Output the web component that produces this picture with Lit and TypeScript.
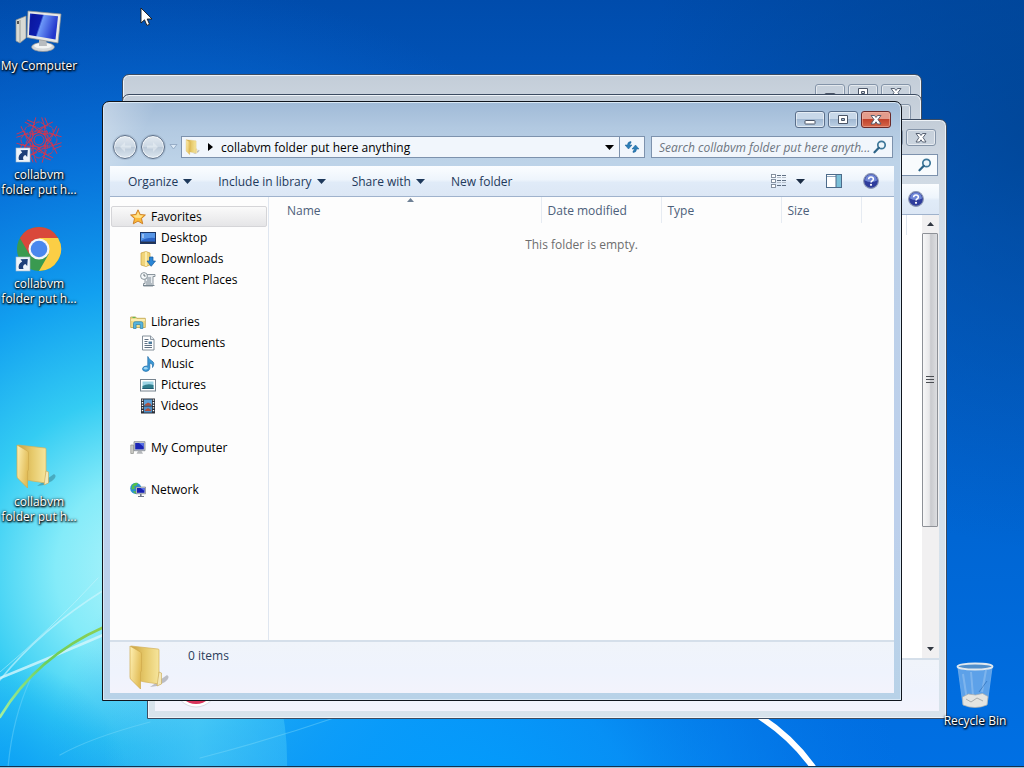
import { LitElement, html, css, svg, nothing } from "lit";
import { customElement, property } from "lit/decorators.js";
import { classMap } from "lit/directives/class-map.js";

const art: Record<string, unknown> = {
  star: svg`<path d="M8 .8l2.200 4.700 5.200.5-3.900 3.500 1.200 5.300L8 12.100l-4.700 2.700 1.200-5.300L.6 6l5.200-.5z" fill="#fbb93a" stroke="#c9781c" stroke-width=".9"/><path d="M8 2.500l1.600 3.700 3.600.4-2.700 2.400-5-.2L3 6.600l3.500-.4z" fill="#ffe28a"/>`,
  desktop: svg`<rect x=".5" y="2.500" width="15" height="11" fill="#2b63c4" stroke="#1c3666"/><path d="M1 3h14v5Q7 7 1 11z" fill="#5795e6"/><rect x="1" y="11.600" width="14" height="1.600" fill="#27344f"/><path d="M2 5h2M2 7h2" stroke="#fff" stroke-width=".8"/>`,
  downloads: svg`<path d="M1 2l5-1.500 4 1.500V14l-4 1.500L1 14z" fill="#f0d479" stroke="#c8a23d" stroke-width=".7"/><path d="M6 .8V15" stroke="#fff4bd" stroke-width="1.500"/><path d="M9.500 6h3.500v4h2.500L11.200 15.300 7 10h2.500z" fill="#2a86d6" stroke="#155a9e" stroke-width=".7"/>`,
  recent: svg`<path d="M5 2.500h10v2h-2v9.500H3.500v-2.500H5z" fill="#e9edf0" stroke="#7f8b93" stroke-width=".9"/><path d="M7 6h4M7 8h4M6 10h5M3 13.500h11.500M6 12h6" stroke="#717f8a" stroke-width=".9"/><circle cx="4" cy="4" r="3.400" fill="#f7fafb" stroke="#7f8b93" stroke-width=".9"/><path d="M4 2v2h1.600" fill="none" stroke="#46535c" stroke-width=".8"/>`,
  libraries: svg`<path d="M.7 3h5l1 1.300h8.600v9.200H.7z" fill="#f3dd8a" stroke="#bfa24a" stroke-width=".8"/><path d="M1 6h14" stroke="#fff6c8" stroke-width="1.300"/><path d="M3.500 14.500V9.300q0-1.600 1.700-1.600h6q1.700 0 1.700 1.600v5.200h-2.600v-4H6.100v4z" fill="#56b4dd" stroke="#2b7fae" stroke-width=".7"/><path d="M2.500 3.500h3" stroke="#5fb858" stroke-width="1.200"/>`,
  documents: svg`<path d="M2.500 1h8L14 4.300V15H2.500z" fill="#fff" stroke="#77838f" stroke-width=".9"/><path d="M10.500 1v3.500H14" fill="#dfe6ec" stroke="#77838f" stroke-width=".8"/><path d="M4.500 4.500h4M4.500 6.500h3M4.500 8.500h3M4.500 10.500h7.500M4.500 12.500h7.500" stroke="#4f6175" stroke-width=".9"/><rect x="8.500" y="6.500" width="3.500" height="2.600" fill="#4f7b9c"/>`,
  music: svg`<path d="M7.800 .5q.6 2.400 3.800 4.200Q15.500 7 12.500 11.500q.8-3.500-2.700-4.600v5.400q-.4 2.900-4 3.200-3.500-.3-3.300-2.900.6-2.600 4-2.600.8 0 1.300.2z" fill="#3d9ad6" stroke="#1c6ca8" stroke-width=".7"/><ellipse cx="5.700" cy="12.300" rx="1.900" ry="1.300" fill="#9fd6f4"/>`,
  pictures: svg`<rect x=".5" y="2.500" width="15" height="11.500" fill="#fff" stroke="#76838e"/><rect x="2.500" y="4.500" width="11" height="7.500" fill="#9bd3e4"/><path d="M2.500 9q5-3 11-1v4h-11z" fill="#2f7d8c"/><path d="M2.500 11h11v1h-11z" fill="#1f5a72"/>`,
  videos: svg`<rect x="1" y=".5" width="14" height="15" fill="#2b2f38"/><rect x="4" y="1.500" width="8" height="6" fill="#5d9fd6"/><rect x="4" y="8.500" width="8" height="6" fill="#4d8fc8"/><path d="M5 6.500l3-2L11 6v1.500H5zM5 12l3-2 3 2v1H5z" fill="#b0503c"/><path d="M2.500 1.500v13M13.500 1.500v13" stroke="#fff" stroke-width="1.400" stroke-dasharray="1.300 1.300"/>`,
  computer: svg`<path d="M.8 5h2.600v8.500H.8z" fill="#cfd0cb" stroke="#8b8c88" stroke-width=".7"/><path d="M4 1.700h11v9H4z" fill="#c9ced6" stroke="#82878f" stroke-width=".8"/><path d="M5.200 3h8.600v6.400H5.200z" fill="#1b24b5"/><path d="M9 3h4.800v4z" fill="#5870e4"/><path d="M8 11h3.500l1.500 2.800H6.500z" fill="#b4b7ba"/>`,
  network: svg`<circle cx="5.800" cy="6.400" r="5.600" fill="#2a8fd2"/><path d="M2 3.200q3-3 6-2.200L6.500 3.500 4 4.500l1 2.500-3.500.5zM3 9l3 .5v2.300q-2-.3-3-2.800z" fill="#54c04a"/><path d="M6 5h9.500v6.800H6z" fill="#c8cdd6" stroke="#70757d" stroke-width=".6"/><path d="M7 6h7.500v4.800H7z" fill="#1720b4"/><path d="M10.500 6h4v3z" fill="#5b74e8"/><path d="M10 12h1.600v2H14v1H8v-1h2z" fill="#6e7788"/>`,
};

const glyph = (name: string) =>
  html`<svg class="glyph" viewBox="0 0 16 16" aria-hidden="true">${art[name]}</svg>`;

const folder = (cls: string, box = "0 0 48 48") => html`<svg class=${cls} viewBox=${box} aria-hidden="true">
  <defs>
    <linearGradient id="fa" x1="0" x2="1" y1="0" y2=".4"><stop offset="0" stop-color="#fff1b4"/><stop offset="1" stop-color="#e2bd58"/></linearGradient>
    <linearGradient id="fb" x1="0" x2="1"><stop offset="0" stop-color="#c9a043"/><stop offset=".5" stop-color="#e6c96a"/><stop offset="1" stop-color="#f6e59c"/></linearGradient>
  </defs>
  <path d="M22 43L39 31q4 2-2 7l-8 4z" fill="#000" opacity=".22"/>
  <path d="M3 2l27 3q1 0 1 1v34l-14-2L3 35z" fill="url(#fb)" stroke="#d4b25a" stroke-width=".7"/>
  <path d="M31 28l2.500 1v11L29 42z" fill="#f4e8b8" stroke="#c9a850" stroke-width=".6"/>
  <path d="M2 2l10.500 6q1 .7 1 2v17l-1 1v17L3.500 36Q2 35 2 33z" fill="url(#fa)" stroke="#d0ab4c" stroke-width=".7"/>
</svg>`;

const arrowDown = html`<svg class="down" viewBox="0 0 9 5" aria-hidden="true"><path d="M0 0h9L4.500 5z" fill="currentColor"/></svg>`;

const lens = html`<svg class="lens" viewBox="0 0 14 14" aria-hidden="true"><circle cx="8.500" cy="5" r="3.700" fill="#eef6fb" stroke="#3d7799" stroke-width="1.700"/><path d="M5.800 7.800L1.500 12.300" stroke="#2d6488" stroke-width="2.200" stroke-linecap="round"/></svg>`;

const help = html`<svg class="help" viewBox="0 0 16 16" aria-hidden="true"><circle cx="8" cy="8" r="7.400" fill="#2e3c9c" stroke="#8d99b5" stroke-width="1.100"/><path d="M2 7.500a6 6 0 0 1 12 0q-6 3-12 0z" fill="#6f86d6"/><path d="M5.600 6.200Q5.800 4 8 4t2.400 2q0 1.200-1.300 1.900-1 .6-1 1.600" fill="none" stroke="#fff" stroke-width="1.600"/><circle cx="8" cy="11.800" r="1.100" fill="#fff"/></svg>`;

const base = css`
  * { box-sizing: border-box; }
  button { font: inherit; color: inherit; background: none; border: 0; padding: 0; margin: 0; }
  svg { display: block; flex: none; }
`;

/** Glass window frame with caption buttons; the contents are slotted below the caption. */
@customElement("aero-window")
class AeroWindow extends LitElement {
  @property({ type: Boolean, reflect: true }) active = false;

  static styles = [
    base,
    css`
      :host {
        display: flex;
        flex-direction: column;
        box-sizing: border-box;
        border: 1px solid #3c4c62;
        border-radius: 7px 7px 0 0;
        padding: 0 7px 7px;
        background: linear-gradient(#c3cdd8, #cfd8e2 40px, #d3dee9 110px, #d8e3ec);
        box-shadow: inset 0 0 0 1px #eef3f8;
      }
      :host([active]) {
        border-color: #10151d;
        background: linear-gradient(115deg, #ffffff55, #ffffff00 50px),
          linear-gradient(#a0bad7, #b2c9e1 26px, #bdd3e8 60px, #bdd1e9 120px, #bdd0ec 70%, #b8d2e8);
        box-shadow: inset 0 0 0 1px #d9e8f5;
      }
      .caption {
        display: flex;
        justify-content: flex-end;
        gap: 3px;
        height: 32px;
        flex: none;
        padding: 9px 3px 0 0;
      }
      .caption button {
        display: grid;
        place-items: center;
        width: 30px;
        height: 17px;
        border: 1px solid #8494a8;
        border-radius: 3px;
        box-shadow: inset 0 0 0 1px #ffffff88;
      }
      :host([active]) .caption button {
        border-color: #5a6f8b;
        background: linear-gradient(#c8d8e9 48%, #a2b9d3 50%, #bdd1e5);
      }
      :host([active]) .caption .close {
        border-color: #6a2a2a;
        background: linear-gradient(#e39c8c 48%, #c1432c 50%, #d5674a);
        box-shadow: inset 0 0 0 1px #f4b9a888;
      }
      .caption svg { width: 14px; height: 12px; }
    `,
  ];

  render() {
    return html`
      <div class="caption">
        <button aria-label="Minimize"><svg viewBox="0 0 14 12"><rect x="2" y="6.500" width="10" height="3.500" rx=".5" fill="#fff" stroke="#4b5566"/></svg></button>
        <button aria-label="Maximize"><svg viewBox="0 0 14 12"><path d="M2.500 1.500h9v8h-9zM5.500 4.500v2h3v-2z" fill="#fff" fill-rule="evenodd" stroke="#4b5566"/></svg></button>
        <button class="close" aria-label="Close"><svg viewBox="0 0 14 12"><path d="M2 1.500h3.500L7 3.500l1.500-2H12L9 5.500l3 4.500H8.500L7 7.800 5.500 10H2L5 5.500z" fill="#fff" stroke="#4b5566" stroke-width=".9"/></svg></button>
      </div>
      <slot></slot>
    `;
  }
}

type Item = { name: string; icon: string; children?: Item[]; selected?: boolean };

const places: Item[] = [
  {
    name: "Favorites", icon: "star", selected: true,
    children: [
      { name: "Desktop", icon: "desktop" },
      { name: "Downloads", icon: "downloads" },
      { name: "Recent Places", icon: "recent" },
    ],
  },
  {
    name: "Libraries", icon: "libraries",
    children: [
      { name: "Documents", icon: "documents" },
      { name: "Music", icon: "music" },
      { name: "Pictures", icon: "pictures" },
      { name: "Videos", icon: "videos" },
    ],
  },
  { name: "My Computer", icon: "computer" },
  { name: "Network", icon: "network" },
];

const commands = [
  { label: "Organize", menu: true },
  { label: "Include in library", menu: true },
  { label: "Share with", menu: true },
  { label: "New folder", menu: false },
];

const shortcut = svg`<rect x="1" y="32" width="14" height="14" fill="#eef4fa" stroke="#a9bccd" stroke-width=".6"/><path d="M4 44q-1.600-5 3.200-7.600L5.500 34.300l7.300-.3-.6 7-1.800-1.900Q7 40.500 8.500 44z" fill="#1d3f78"/>`;

const rosette = html`<svg class="big" viewBox="0 0 48 48" aria-hidden="true">
  <g fill="none" stroke="#d8344c" stroke-width=".9">
    ${[0, 45, 90, 135].map((a) => svg`<ellipse cx="24" cy="24" rx="18" ry="9" transform="rotate(${a} 24 24)" stroke-dasharray="4 1"/>`)}
    ${[0, 45, 90, 135, 180, 225, 270, 315].map((a) => svg`<path d="M18 2l6 7 6-7M21 1l6 6M24 9l-4 8h8z" transform="rotate(${a + 22} 24 24)"/>`)}
    <circle cx="24" cy="24" r="5"/><circle cx="24" cy="24" r="7.500" stroke-dasharray="2 1"/>
  </g>
  ${shortcut}
</svg>`;

const chrome = html`<svg class="big" viewBox="0 0 48 48" aria-hidden="true">
  <circle cx="24" cy="24" r="22" fill="#3a9a50"/>
  <path d="M4.900 13A22 22 0 0 1 43.100 13L24 13.500 14.500 29.500z" fill="#d9483b"/>
  <path d="M43.100 13A22 22 0 0 1 24 46L33.500 29.500 24 13z" fill="#fbce45"/>
  <circle cx="24" cy="24" r="10.500" fill="#f4f6f8"/><circle cx="24" cy="24" r="8.300" fill="#4a87ee"/>
  ${shortcut}
</svg>`;

const pc = html`<svg class="big" viewBox="0 0 48 48" aria-hidden="true">
  <defs><linearGradient id="scr" x1="0" x2="1" y1="0" y2=".3"><stop offset="0" stop-color="#2a4ee0"/><stop offset=".12" stop-color="#0a17a0"/><stop offset=".44" stop-color="#0d1eae"/><stop offset=".5" stop-color="#6c97f8"/><stop offset="1" stop-color="#2337cc"/></linearGradient></defs>
  <path d="M1 13l10-4v22L5 36l-4-2z" fill="#d9dad4" stroke="#8e918d" stroke-width=".7"/><path d="M5 13v22" stroke="#9c9f9a"/><rect x="2" y="14" width="2" height="3" fill="#555"/>
  <ellipse cx="28" cy="40" rx="11.500" ry="4.500" fill="#d5d8da" stroke="#8c8f92" stroke-width=".7"/><ellipse cx="28" cy="38.800" rx="9" ry="2.800" fill="#f3f4f4"/>
  <path d="M24 30h7l1 9h-8z" fill="#b9bcbf"/>
  <path d="M13 4l33 3-3 29-31-5.500z" fill="#e7e8e6" stroke="#8f9292" stroke-width=".7"/>
  <path d="M15 6.500l28 2.700-2.500 23.300L14 28z" fill="url(#scr)"/>
</svg>`;

const bin = html`<svg class="big" viewBox="0 0 48 48" aria-hidden="true">
  <path d="M7 5l5 37q12 5 24 0l5-37z" fill="#cfe3f7" opacity=".45" stroke="#dcecfa" stroke-width="1.200"/>
  <path d="M12 12l4 26M35 8l-4 22M20 10l2 24" stroke="#fff" opacity=".2" stroke-width="2"/>
  <path d="M36 19l-8 11" stroke="#1d5da8" opacity=".5"/>
  <path d="M11.500 35l6-3 7 1 7-1.500 5.500 3L36 43q-12 5-24 0z" fill="#e3e4e1" stroke="#a9adae" stroke-width=".7"/>
  <path d="M15 37l5 3 6-4 6 3" fill="none" stroke="#a9adae"/>
  <ellipse cx="24" cy="4.500" rx="17.500" ry="3" fill="#4f8ecb" stroke="#dfe8ef" stroke-width="1.800"/>
</svg>`;

@customElement("app-root")
class AppRoot extends LitElement {
  static styles = [
    base,
    css`
      :host {
        display: block;
        position: relative;
        height: 100vh;
        overflow: hidden;
        font: 12px/15px "Open Sans", "Noto Sans", sans-serif;
        color: #000;
        background: #0058c4;
      }
      .wallpaper { position: absolute; inset: 0; width: 100%; height: 100%; }
      .icons {
        position: relative;
        display: grid;
        grid-auto-rows: 109px;
        width: 78px;
      }
      .shortcut {
        display: flex;
        flex-direction: column;
        align-items: center;
        gap: 3px;
        width: 78px;
        padding-top: 7px;
        color: #fff;
        text-align: center;
        text-decoration: none;
        text-shadow: 0 1px 2px #000, 1px 1px 2px #000, 0 0 3px #000a;
      }
      .shortcut.lower { grid-row: 5; }
      .big { width: 48px; height: 48px; }
      .bin { position: absolute; right: 10px; bottom: 40px; padding: 0; }
      .pointer { position: absolute; left: 140px; top: 7px; width: 13px; height: 20px; }
      .taskbar {
        position: absolute;
        inset: auto 0 0 0;
        height: 2px;
        border-top: 1px solid #14304c;
        background: #9fc6de;
      }
      aero-window { position: absolute; }
      .first { inset: 74px 102px 118px 122px; }
      .second { inset: 94px 102px 98px 122px; }
      .third { inset: 119px 77px 49px 147px; }
      .main { inset: 101px 122px 67px 102px; }

      .nav { display: flex; align-items: center; flex: none; height: 24px; margin: 1px 1px 7px 3px; }
      .travel { display: flex; gap: 4px; }
      .travel button {
        width: 24px; height: 24px; border-radius: 50%;
        border: 1px solid #5f7189;
        background: linear-gradient(#e3eaf1, #ccd8e4 48%, #bccad9 52%, #dbe6ef);
        box-shadow: inset 0 0 0 1px #ffffff99, 0 0 0 1px #8fa3ba66;
      }
      .travel svg { width: 22px; height: 22px; }
      .history { width: 16px; display: grid; place-items: center; }
      .history svg { width: 9px; height: 6px; }
      .field {
        display: flex;
        align-items: center;
        height: 22px;
        border: 1px solid #7d92ad;
        background: #f1f6fc;
      }
      .address { flex: 1; min-width: 0; }
      .address .path { display: flex; align-items: center; flex: 1; min-width: 0; gap: 8px; padding-left: 2px; }
      .address .path .crumb { white-space: nowrap; }
      .mini { width: 16px; height: 16px; }
      .tri { width: 5px; height: 8px; }
      .drop { padding: 0 5px; }
      .down { width: 9px; height: 5px; }
      .refresh { display: grid; place-items: center; width: 25px; height: 20px; border-left: 1px solid #7d92ad; }
      .refresh svg { width: 16px; height: 14px; }
      .search { width: 242px; margin-left: 6px; padding: 0 5px 0 7px; }
      .search input {
        flex: 1; min-width: 0; border: 0; padding: 0; outline: 0; background: none;
        font: inherit; font-style: italic;
      }
      .search input::placeholder { color: #6d7580; opacity: 1; }
      .lens { width: 14px; height: 14px; }

      .toolbar {
        display: flex;
        align-items: center;
        gap: 26px;
        flex: none;
        height: 31px;
        padding: 0 15px 0 18px;
        color: #1e395b;
        border-bottom: 1px solid #9fb2cc;
        background: linear-gradient(#fbfdff, #eef5fc 45%, #e0ebf8 55%, #dce7f5);
      }
      .toolbar button { display: flex; align-items: center; gap: 5px; white-space: nowrap; }
      .toolbar .tools { display: flex; align-items: center; margin-left: auto; gap: 21px; }
      .toolbar .view { gap: 9px; }
      .tools svg { color: #1b2d45; }
      .list, .pane { width: 16px; height: 16px; }
      .help { width: 16px; height: 16px; }

      .body { display: flex; flex: 1; min-height: 0; background: #fdfdfd; }
      .tree { width: 159px; flex: none; padding: 9px 1px 0; border-right: 1px solid #dfe6f0; }
      .tree ul { list-style: none; margin: 0; padding: 0; }
      .tree .group { margin-bottom: 21px; }
      .tree a {
        display: flex; align-items: center; gap: 5px; height: 21px; padding-left: 18px;
        border: 1px solid transparent; border-radius: 2px;
        color: #000; text-decoration: none;
      }
      .tree ul ul a { padding-left: 28px; }
      .tree a.selected { border-color: #d5d5d8; background: linear-gradient(#fafafa, #e5e5e7); }
      .glyph { width: 16px; height: 16px; }
      .files { flex: 1; min-width: 0; padding-left: 12px; }
      table { width: 100%; table-layout: fixed; border-collapse: collapse; }
      th {
        position: relative; height: 26px; padding: 0 6px; text-align: left; font-weight: 400; color: #4c607a;
        border-right: 1px solid #e6ebf2;
      }
      th:first-child { width: 260px; }
      th:last-child { border: 0; width: auto; }
      .wide { width: 120px; }
      .narrow { width: 80px; }
      .sort { position: absolute; left: 0; right: 0; top: 1px; margin: 0 auto; width: 7px; height: 4px; }
      td { padding: 14px 12px 0 0; text-align: center; color: #6d6d6d; }
      .details {
        display: flex; gap: 12px; flex: none; height: 53px; padding: 0 18px;
        border-top: 2px solid #d5dfea;
        color: #2c3e5c; background: linear-gradient(#f0f4fa, #eff3fd 60%, #f3f3fc);
      }
      .details span { margin-top: 6px; }
      .stack { width: 48px; height: 48px; margin-top: 2px; }

      .third .nav { justify-content: flex-end; }
      .third .toolbar { justify-content: flex-end; }
      .third .body { justify-content: flex-end; background: #fff; }
      .third .search { background: #f8fbfd; }
      .edge { width: 1px; height: 20px; margin-right: 15px; background: #dfe6ef; }
      .scroll { display: flex; flex-direction: column; width: 17px; padding-right: 1px; background: #f1f0f1; }
      .scroll button { display: grid; place-items: center; height: 18px; color: #303640; }
      .scroll .down { width: 7px; height: 4px; }
      .scroll .up { transform: rotate(180deg); }
      .thumb {
        display: grid; place-items: center; flex: 0 1 294px;
        border: 1px solid #8e9197; border-radius: 1px;
        background: linear-gradient(90deg, #f7f7f8, #e8e8ea 45%, #c9cace 55%, #dcdde0);
      }
      .thumb svg { width: 8px; height: 8px; }
      .rest { flex: 1; }
      .third .details { padding: 0 24px; }
      .badge { width: 48px; height: 48px; margin-top: 2px; }
    `,
  ];

  private entry(item: Item, group = false): unknown {
    return html`<li class=${classMap({ group })}>
      <a href="#" class=${classMap({ selected: !!item.selected })}>${glyph(item.icon)}${item.name}</a>
      ${item.children ? html`<ul>${item.children.map((c) => this.entry(c))}</ul>` : nothing}
    </li>`;
  }

  private wallpaper() {
    return html`<svg class="wallpaper" viewBox="0 0 1024 768" preserveAspectRatio="none" aria-hidden="true">
      <defs>
        <linearGradient id="sky" x1="0" y1="0" x2="0" y2="1">
          <stop offset="0" stop-color="#004cac"/><stop offset=".3" stop-color="#0460cc"/><stop offset=".7" stop-color="#0066d4"/><stop offset="1" stop-color="#0070e4"/>
        </linearGradient>
        <radialGradient id="glow" gradientUnits="userSpaceOnUse" cx="150" cy="570" r="590">
          <stop offset="0" stop-color="#b4f5fb"/><stop offset=".16" stop-color="#84ebf9"/><stop offset=".3" stop-color="#34ccf3"/><stop offset=".48" stop-color="#12a0f0"/><stop offset=".72" stop-color="#0877e0" stop-opacity=".7"/><stop offset="1" stop-color="#0560cc" stop-opacity="0"/>
        </radialGradient>
        <radialGradient id="floor" gradientUnits="userSpaceOnUse" cx="470" cy="850" r="440">
          <stop offset="0" stop-color="#00a2ff"/><stop offset=".4" stop-color="#0898fb" stop-opacity=".8"/><stop offset="1" stop-color="#0878ea" stop-opacity="0"/>
        </radialGradient>
        <radialGradient id="corner" gradientUnits="userSpaceOnUse" cx="0" cy="790" r="130">
          <stop offset="0" stop-color="#0aa0f6"/><stop offset="1" stop-color="#0aa0f6" stop-opacity="0"/>
        </radialGradient>
        <radialGradient id="dusk" gradientUnits="userSpaceOnUse" cx="1060" cy="130" r="420">
          <stop offset="0" stop-color="#00428e" stop-opacity=".8"/><stop offset="1" stop-color="#00428e" stop-opacity="0"/>
        </radialGradient>
        <linearGradient id="beam" gradientUnits="userSpaceOnUse" x1="104" y1="0" x2="290" y2="0"><stop offset="0" stop-color="#62dcf8" stop-opacity="0"/><stop offset=".5" stop-color="#62dcf8" stop-opacity=".45"/><stop offset="1" stop-color="#62dcf8" stop-opacity=".3"/></linearGradient>
        <linearGradient id="grass" gradientUnits="userSpaceOnUse" x1="0" y1="720" x2="110" y2="620"><stop offset="0" stop-color="#a6f0a0"/><stop offset=".5" stop-color="#6ccf5a"/><stop offset="1" stop-color="#94cf52"/></linearGradient>
      </defs>
      <rect width="1024" height="768" fill="url(#sky)"/>
      <rect width="1024" height="768" fill="url(#glow)"/>
      <rect width="1024" height="768" fill="url(#floor)"/>
      <rect width="1024" height="768" fill="url(#corner)"/>
      <rect width="1024" height="768" fill="url(#dusk)"/>
      <path d="M104 690h174q10 40 9 78H104z" fill="url(#beam)"/>
      <g fill="none" stroke-linecap="round">
        <path d="M0 678Q50 658 110 632" stroke="#d4f6fd" stroke-width="2.500" opacity=".8"/>
        <path d="M0 680Q40 630 104 590" stroke="#d4f6fd" stroke-width="1.500" opacity=".6"/>
        <path d="M0 672Q50 630 98 578" stroke="#d4f6fd" stroke-width="1" opacity=".45"/>
        <path d="M0 717Q36 657 104 627" stroke="url(#grass)" stroke-width="2.500"/>
        <path d="M8 768Q12 720 30 680M60 755Q90 738 150 722M200 758Q270 740 340 716" stroke="#7fdcfa" stroke-width="1.200" opacity=".4"/>
        <path d="M752 712Q790 734 815 770" stroke="#fff" stroke-width="6"/>
      </g>
    </svg>`;
  }

  render() {
    return html`
      ${this.wallpaper()}
      <nav class="icons" aria-label="Desktop">
        <a class="shortcut" href="#">${pc}My Computer</a>
        <a class="shortcut" href="#">${rosette}collabvm folder put h...</a>
        <a class="shortcut" href="#">${chrome}collabvm folder put h...</a>
        <a class="shortcut lower" href="#">${folder("big")}collabvm folder put h...</a>
      </nav>

      <aero-window class="first"></aero-window>
      <aero-window class="second"></aero-window>

      <aero-window class="third">
        <div class="nav"><label class="field search"><input type="text" aria-label="Search" />${lens}</label></div>
        <div class="toolbar"><button aria-label="Help">${help}</button></div>
        <div class="body">
          <div class="edge"></div>
          <div class="scroll">
            <button aria-label="Scroll up"><svg class="down up" viewBox="0 0 9 5"><path d="M0 0h9L4.500 5z" fill="currentColor"/></svg></button>
            <div class="thumb"><svg viewBox="0 0 8 8"><path d="M0 .5h8M0 3.500h8M0 6.500h8" stroke="#4a4d52"/></svg></div>
            <div class="rest"></div>
            <button aria-label="Scroll down">${arrowDown}</button>
          </div>
        </div>
        <div class="details"><svg class="badge" viewBox="0 0 48 48"><circle cx="17" cy="24" r="21" fill="#fff" stroke="#d9dbe4"/><circle cx="17" cy="24" r="18" fill="#d8345c"/></svg></div>
      </aero-window>

      <aero-window class="main" active>
        <div class="nav">
          <div class="travel">
            <button aria-label="Back"><svg viewBox="0 0 22 22"><path d="M11 6l-5 5 5 5v-3.500h6v-3h-6z" fill="#eef3f8" opacity=".5"/></svg></button>
            <button aria-label="Forward"><svg viewBox="0 0 22 22"><path d="M11 6l5 5-5 5v-3.500H5v-3h6z" fill="#eef3f8" opacity=".5"/></svg></button>
          </div>
          <button class="history" aria-label="Recent pages"><svg viewBox="0 0 9 6"><path d="M1 .5h7L4.500 5z" fill="#dbe9f6" stroke="#8ba2be" stroke-width=".8"/></svg></button>
          <div class="field address">
            <div class="path">
              ${folder("mini", "-4 0 46 46")}
              <svg class="tri" viewBox="0 0 5 8"><path d="M0 0v8l5-4z"/></svg>
              <button class="crumb">collabvm folder put here anything</button>
            </div>
            <button class="drop" aria-label="Previous locations">${arrowDown}</button>
            <button class="refresh" aria-label="Refresh"><svg viewBox="0 0 16 14"><path d="M7 1.500Q3.500 1.500 3.500 5H1l3.500 4L8 5H5.600Q5.500 3.500 7 3z" fill="#2c7fb8" stroke="#1b5f94" stroke-width=".5"/><path d="M9 12.500q3.500 0 3.500-3.500H15l-3.500-4L8 9h2.400q.1 1.500-1.400 2z" fill="#2c7fb8" stroke="#1b5f94" stroke-width=".5"/></svg></button>
          </div>
          <label class="field search"><input type="text" aria-label="Search" placeholder="Search collabvm folder put here anyth..." />${lens}</label>
        </div>
        <div class="toolbar">
          ${commands.map((c) => html`<button>${c.label}${c.menu ? arrowDown : nothing}</button>`)}
          <div class="tools">
            <button class="view" aria-label="Change your view">
              <svg class="list" viewBox="0 0 16 16"><g fill="#fff" stroke="#7a8798" stroke-width=".9"><rect x=".5" y="1.500" width="4" height="3"/><rect x=".5" y="6.500" width="4" height="3"/><rect x=".5" y="11.500" width="4" height="3"/></g><path d="M6 2.500h10M6 7.500h10M6 12.500h10" stroke="#5f6f83" stroke-dasharray="4 1"/><path d="M6 4.500h10M6 9.500h10" stroke="#b5bfca" stroke-dasharray="4 1"/></svg>
              ${arrowDown}
            </button>
            <button aria-label="Preview pane"><svg class="pane" viewBox="0 0 16 16"><rect x=".5" y="1.500" width="15" height="13" fill="#fff" stroke="#4d6b8a"/><path d="M1 3.500h9" stroke="#8fa6bd"/><rect x="10" y="2" width="5" height="12" fill="#7cc0d8"/><path d="M10 2v12" stroke="#4d6b8a"/></svg></button>
            <button aria-label="Help">${help}</button>
          </div>
        </div>
        <div class="body">
          <nav class="tree" aria-label="Places"><ul>${places.map((p) => this.entry(p, true))}</ul></nav>
          <div class="files">
            <table>
              <thead>
                <tr>
                  <th>Name<svg class="sort" viewBox="0 0 7 4"><path d="M0 4h7L3.500 0z" fill="#6f8196"/></svg></th>
                  <th class="wide">Date modified</th>
                  <th class="wide">Type</th>
                  <th class="narrow">Size</th>
                  <th></th>
                </tr>
              </thead>
              <tbody><tr><td colspan="5">This folder is empty.</td></tr></tbody>
            </table>
          </div>
        </div>
        <div class="details">${folder("stack")}<span>0 items</span></div>
      </aero-window>

      <a class="shortcut bin" href="#">${bin}Recycle Bin</a>
      <svg class="pointer" viewBox="0 0 13 20" aria-hidden="true"><path d="M1 1v15l3.500-3.200 2.400 5.600 2.600-1.100L7.200 12H12z" fill="#fff" stroke="#1a1a1a" stroke-width=".9"/></svg>
      <div class="taskbar"></div>
    `;
  }
}
